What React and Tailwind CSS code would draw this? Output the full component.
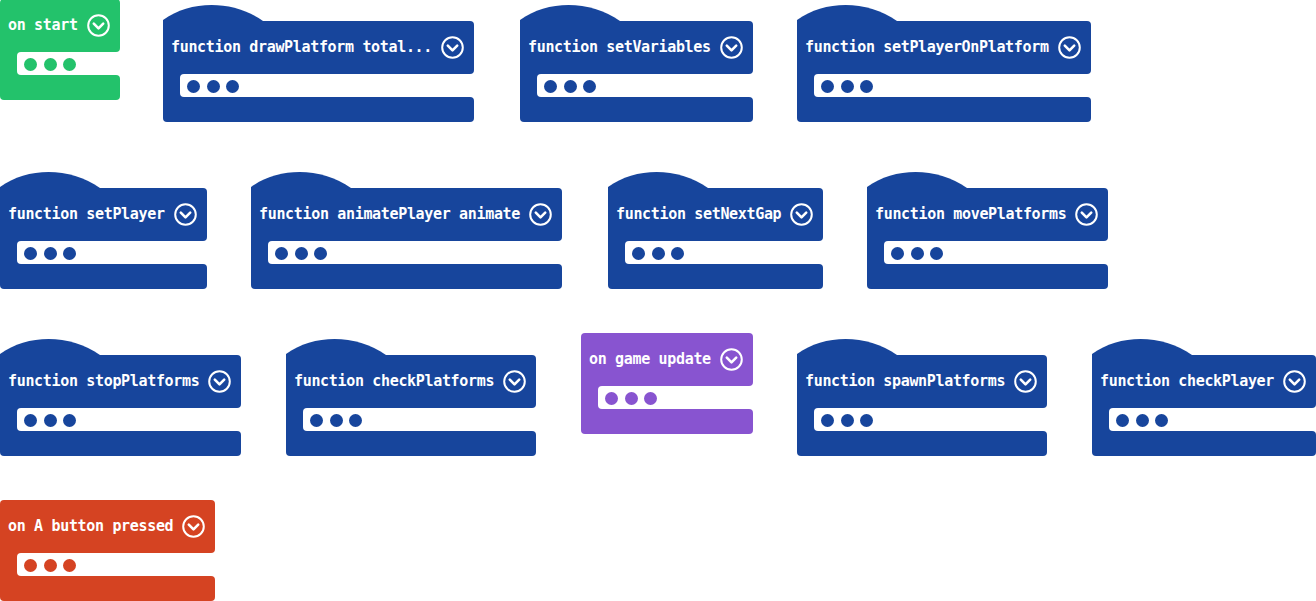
import React from "react";

const themes = {
  fn: { bg: "bg-[#17459c]", text: "text-[#17459c]" },
  start: { bg: "bg-[#23c26b]", text: "text-[#23c26b]" },
  game: { bg: "bg-[#8854d0]", text: "text-[#8854d0]" },
  ctrl: { bg: "bg-[#d54322]", text: "text-[#d54322]" },
};

const blocks = [
  { label: "on start", theme: "start", hat: false, pos: "left-0 top-[-1px]" },
  { label: "function drawPlatform total...", theme: "fn", hat: true, pos: "left-[163px] top-[5px]" },
  { label: "function setVariables", theme: "fn", hat: true, pos: "left-[520px] top-[5px]" },
  { label: "function setPlayerOnPlatform", theme: "fn", hat: true, pos: "left-[797px] top-[5px]" },
  { label: "function setPlayer", theme: "fn", hat: true, pos: "left-0 top-[172px]" },
  { label: "function animatePlayer animate", theme: "fn", hat: true, pos: "left-[251px] top-[172px]" },
  { label: "function setNextGap", theme: "fn", hat: true, pos: "left-[608px] top-[172px]" },
  { label: "function movePlatforms", theme: "fn", hat: true, pos: "left-[867px] top-[172px]" },
  { label: "function stopPlatforms", theme: "fn", hat: true, pos: "left-0 top-[339px]" },
  { label: "function checkPlatforms", theme: "fn", hat: true, pos: "left-[286px] top-[339px]" },
  { label: "on game update", theme: "game", hat: false, pos: "left-[581px] top-[333px]" },
  { label: "function spawnPlatforms", theme: "fn", hat: true, pos: "left-[797px] top-[339px]" },
  { label: "function checkPlayer", theme: "fn", hat: true, pos: "left-[1092px] top-[339px]" },
  { label: "on A button pressed", theme: "ctrl", hat: false, pos: "left-0 top-[500px]" },
];

const Chevron = () => (
  <svg width="23" height="23" viewBox="0 0 23 23" className="ml-[9px] shrink-0">
    <circle cx="11.5" cy="11.5" r="10.3" fill="none" stroke="white" strokeWidth="2" />
    <polyline
      points="6.8,9.6 11.5,14.3 16.2,9.6"
      fill="none"
      stroke="white"
      strokeWidth="2.6"
      strokeLinecap="round"
      strokeLinejoin="round"
    />
  </svg>
);

const Block = ({ label, theme, hat, pos }) => {
  const { bg, text } = themes[theme];
  return (
    <div className={`absolute flex flex-col ${pos}`}>
      {hat && (
        <svg width="100" height="17" viewBox="0 0 100 17" className={`block -mb-px ${text}`}>
          <path d="M0 17 L0 15 C28 -5 70 -5 100 16 L100 17 Z" fill="currentColor" />
        </svg>
      )}
      <div
        className={`flex items-center h-[53px] pl-[8px] pr-[10px] pb-[1px] ${bg} ${
          hat ? "rounded-tr-[4px]" : "rounded-t-[4px]"
        } rounded-br-[4px]`}
      >
        <span className="whitespace-nowrap text-white font-bold text-[15px] tracking-[-0.33px] leading-none font-['DejaVu_Sans_Mono',monospace]">
          {label}
        </span>
        <Chevron />
      </div>
      <div className={`flex h-[23px] ${bg}`}>
        <div className="w-[17px] shrink-0" />
        <div className="flex-1 flex items-center gap-[6.5px] pl-[7px] pt-[2px] bg-white rounded-l-[4px]">
          <span className={`w-[13px] h-[13px] rounded-full ${bg}`} />
          <span className={`w-[13px] h-[13px] rounded-full ${bg}`} />
          <span className={`w-[13px] h-[13px] rounded-full ${bg}`} />
        </div>
      </div>
      <div className={`h-[25px] ${bg} rounded-b-[4px] rounded-tr-[4px]`} />
    </div>
  );
};

export default function App() {
  return (
    <div className="relative w-full h-[601px] overflow-hidden bg-white">
      {blocks.map((b) => (
        <Block key={b.label} {...b} />
      ))}
    </div>
  );
}
